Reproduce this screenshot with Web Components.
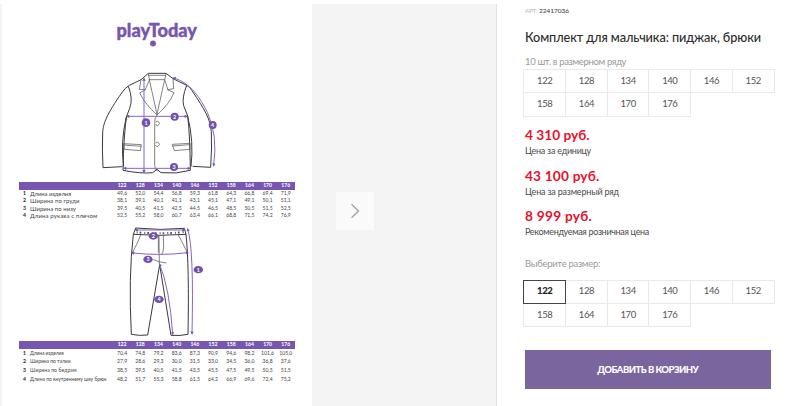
<!DOCTYPE html>
<html lang="ru">
<head>
<meta charset="utf-8">
<title>Комплект для мальчика: пиджак, брюки</title>
<style>
  body {
    margin: 0;
    background: #fff;
    font-family: Lato, "Liberation Sans", sans-serif;
    color: #333;
  }
</style>
</head>
<body>
<product-page>
  <product-gallery slot="gallery">
    <size-sheet></size-sheet>
  </product-gallery>
  <product-info slot="info"></product-info>
</product-page>

<script>
// One line of text, tracked to the width given in the attribute
class TypeLine extends HTMLElement {
  connectedCallback() {
    this.attachShadow({ mode: 'open' }).innerHTML = `
      <style>
        :host { display: block; white-space: nowrap; }
        span { display: block; width: max-content; }
      </style>
      <span><slot></slot></span>
    `;
    const span = this.shadowRoot.querySelector('span');
    const width = parseFloat(this.getAttribute('width'));
    if (!width) return;
    const natural = span.getBoundingClientRect().width;
    const gap = (width - natural) / this.textContent.length;
    span.style.letterSpacing = `${gap.toFixed(3)}px`;
  }
}

class ProductPage extends HTMLElement {
  constructor() {
    super();
    this.attachShadow({ mode: 'open' }).innerHTML = `
      <style>
        :host {
          display: grid;
          grid-template-columns: 497px 1fr;
          height: 406px;
          overflow: hidden;
        }
      </style>
      <slot name="gallery"></slot>
      <slot name="info"></slot>
    `;
  }
}

class ProductGallery extends HTMLElement {
  constructor() {
    super();
    this.attachShadow({ mode: 'open' }).innerHTML = `
      <style>
        :host {
          display: flex;
          align-items: flex-start;
          box-sizing: border-box;
          height: 402px;
          margin-top: 4px;
          padding-left: 2px;
          background: #f4f4f4;
          border-right: 1px solid #e2e2e2;
        }
        button {
          display: flex;
          align-items: center;
          justify-content: center;
          width: 38px;
          height: 38px;
          margin: 188px 0 0 24px;
          padding: 0;
          border: 0;
          background: #fafafa;
        }
      </style>
      <slot></slot>
      <button aria-label="Далее">
        <svg width="10" height="16" viewBox="0 0 10 16" fill="none" stroke="#a0a0a0" stroke-width="1.3">
          <path d="M1.5 1.2 8.5 8 1.5 14.8"/>
        </svg>
      </button>
    `;
  }
}

class SizeTable extends HTMLElement {
  connectedCallback() {
    const data = JSON.parse(this.getAttribute('rows'));
    const sizes = [122, 128, 134, 140, 146, 152, 158, 164, 170, 176];
    this.attachShadow({ mode: 'open' }).innerHTML = `
      <style>
        :host { display: block; width: 276px; color: #444; }
        .row {
          display: grid;
          grid-template-columns: 11px 83px repeat(10, 18.2px);
          align-items: center;
          height: var(--row, 7.5px);
          font-size: 5.1px;
          line-height: 7px;
          text-align: center;
        }
        .head {
          height: 8px;
          margin-bottom: var(--gap, 0);
          background: #7656b0;
          color: #fff;
          font-weight: 700;
        }
        b { color: #222; }
        type-line { text-align: left; font-size: var(--label, 6px); }
      </style>
      <div class="row head"><i></i><i></i>${sizes.map(s => `<span>${s}</span>`).join('')}</div>
      ${data.map(([label, width, values], i) => `
        <div class="row">
          <b>${i + 1}</b>
          <type-line width="${width}">${label}</type-line>
          ${values.split(' ').map(v => `<span>${v}</span>`).join('')}
        </div>`).join('')}
    `;
  }
}

class SizeSheet extends HTMLElement {
  constructor() {
    super();
    const jacket = [
      ['Длина изделия', 41, '49,6 52,0 54,4 56,8 59,3 61,8 64,3 66,8 69,4 71,9'],
      ['Ширина по груди', 49.5, '38,1 39,1 40,1 41,1 43,1 45,1 47,1 49,1 50,1 51,1'],
      ['Ширина по низу', 46, '39,5 40,5 41,5 42,5 44,5 46,5 48,5 50,5 51,5 52,5'],
      ['Длина рукава с плечом', 67.5, '52,5 55,2 58,0 60,7 63,4 66,1 68,8 71,5 74,2 76,9'],
    ];
    const trousers = [
      ['Длина изделия', 33.5, '70,4 74,8 79,2 83,6 87,3 90,9 94,6 98,2 101,6 105,0'],
      ['Ширина по талии', 40.5, '27,9 28,6 29,3 30,0 31,5 33,0 34,5 36,0 36,8 37,6'],
      ['Ширина по бедрам', 46.5, '38,5 39,5 40,5 41,5 43,5 45,5 47,5 49,5 50,5 51,5'],
      ['Длина по внутреннему шву брюк', 76.5, '48,2 51,7 55,3 58,8 61,5 64,2 66,9 69,6 72,4 75,2'],
    ];
    this.attachShadow({ mode: 'open' }).innerHTML = `
      <style>
        :host {
          display: flex;
          flex-direction: column;
          box-sizing: border-box;
          width: 310px;
          height: 402px;
          padding-left: 17px;
          background: #fff;
        }
        svg { display: block; flex: none; }
        .logo { margin: 14px 0 0 91px; }
        .jacket { margin: 6px 0 0 71px; }
        .trousers { margin-left: 91px; }
        .line { fill: none; stroke: #3a3a3a; stroke-width: 3; stroke-linejoin: round; }
        .thin { fill: none; stroke: #555; stroke-width: 2.2; }
        .measure { fill: none; stroke: #8a63cb; stroke-width: 3; }
        .tip { fill: #7656b0; }
        .mark { fill: #7050ae; }
        .num { fill: #fff; font-size: 16px; font-weight: 700; text-anchor: middle; }
        size-table { flex: none; }
        .first { margin-top: 1.7px; --row: 7.5px; --gap: 0; }
        .second { margin-top: 1px; --row: 8.6px; --gap: .3px; --label: 5px; }
      </style>

      <svg class="logo" width="100" height="36" viewBox="110 18 100 36" fill="#7656b0" stroke="#7656b0" stroke-width=".4" stroke-linejoin="round" font-weight="900" font-size="18">
        <text x="116.5" y="37" textLength="80.5" lengthAdjust="spacingAndGlyphs">playToday</text>
        <circle cx="153" cy="43.5" r="2.8"/>
      </svg>

      <svg class="jacket" width="140" height="120" viewBox="0 0 420 360">
        <g class="line">
          <path d="M175 40H228L249 56 290 76Q300 81 306 92C345 150 360 175 364 215Q366 265 362 322L308 319"/>
          <path d="M175 40 153 59 118 76Q106 82 95 99C52 160 39 190 38 219Q36 270 39 323L97 320"/>
          <path d="M110 167Q101 225 99 331 155 342 188 338L201 328 213 338Q260 343 301 331 300 225 293 168"/>
          <path d="M290 76Q275 115 281 137L293 168Q312 245 303 320M115 79Q130 116 119 145L108 174Q91 250 101 320"/>
        </g>
        <g class="thin">
          <path d="M174 46H228M176 59H224M178 59 201 163 224 59M228 42 224 60M175 42 179 61"/>
          <path d="M153 59 148 88 167 89M249 56 251 86 232 89M178 61 165 90 149 99Q165 132 201 165 238 132 252 98L234 90 225 61"/>
          <path d="M201 165Q193 174 194 190V316Q195 330 203 334"/>
          <path d="M101 251 154 254 151 272 103 268ZM247 253 300 250V268L253 272ZM101 255 154 259M247 258 299 254"/>
          <path d="M197 186 203 183 209 190 203 197 196 194M197 249 203 246 209 253 203 260 196 257"/>
        </g>
        <path class="measure" d="M162 57V334M112 169H290M102 325H299M252 54C300 68 330 112 352 157Q384 225 371 316"/>
        <path class="tip" d="M162 52 167 62H157ZM162 340 167 330H157ZM108 169 118 164V174ZM294 169 284 164V174ZM99 325 109 320V330ZM303 325 293 320V330ZM247 53 258 50 255 60ZM371 321 367 310 376 311Z"/>
        <g class="mark"><circle cx="168" cy="188" r="13"/><circle cx="254" cy="170" r="12"/><circle cx="252" cy="321" r="12"/><circle cx="368" cy="195" r="12"/></g>
        <g class="num"><text x="168" y="194">1</text><text x="254" y="176">2</text><text x="252" y="327">3</text><text x="368" y="201">4</text></g>
      </svg>

      <size-table class="first" rows='${JSON.stringify(jacket)}'></size-table>

      <svg class="trousers" width="110" height="120" viewBox="0 0 330 360">
        <g class="line">
          <path d="M77 24Q150 32 223 25L228 43Q150 49 70 43ZM70 43Q55 170 64 343 88 348 113 345L149 134 183 346Q212 348 234 343 238 140 228 43"/>
        </g>
        <path d="M80 37Q150 43 223 36" fill="none" stroke="#555" stroke-width="6" stroke-dasharray="3 6 5 9"/>
        <g class="thin">
          <path d="M92 45Q81 73 67 99M205 45Q219 72 233 99M147 46 148 134M160 46 161 81Q160 100 154 103M145 46V98M130 119Q147 127 169 129"/>
        </g>
        <path class="measure" d="M77 30H223M67 99Q150 108 233 98M149 133Q179 206 188 343M233 27Q252 86 246 341"/>
        <path class="tip" d="M74 30 83 25V35ZM226 30 217 25V35ZM62 99 73 94 72 104ZM237 98 227 94 228 103ZM147 129 156 137 147 139ZM189 346 183 337 192 336ZM232 24 239 32 230 34ZM246 344 241 334 251 335Z"/>
        <g class="mark"><ellipse cx="130" cy="48" rx="14" ry="11"/><ellipse cx="114" cy="118" rx="14" ry="11"/><ellipse cx="265" cy="149" rx="14" ry="11"/><ellipse cx="147" cy="238" rx="14" ry="11"/></g>
        <g class="num"><text x="130" y="54">2</text><text x="114" y="124">3</text><text x="265" y="155">1</text><text x="147" y="244">4</text></g>
      </svg>

      <size-table class="second" rows='${JSON.stringify(trousers)}'></size-table>
    `;
  }
}

class SizeGrid extends HTMLElement {
  connectedCallback() {
    const active = this.getAttribute('active');
    const sizes = ['122', '128', '134', '140', '146', '152', '158', '164', '170', '176'];
    this.attachShadow({ mode: 'open' }).innerHTML = `
      <style>
        :host {
          display: grid;
          grid-template-columns: repeat(6, 41.7px);
          grid-auto-rows: 23.3px;
          height: 47px;
          margin-left: -1.6px;
          font-size: 9.5px;
          color: #555;
        }
        div {
          display: flex;
          align-items: center;
          justify-content: center;
          box-sizing: border-box;
          margin: 0 -1px -1px 0;
          padding-bottom: 1.5px;
          border: 1px solid #e9e9e9;
          letter-spacing: -.4px;
        }
        .active {
          z-index: 1;
          border-color: #444;
          color: #222;
          font-weight: 900;
        }
      </style>
      ${sizes.map(s => `<div class="${s === active ? 'active' : ''}">${s}</div>`).join('')}
    `;
  }
}

class PriceItem extends HTMLElement {
  constructor() {
    super();
    this.attachShadow({ mode: 'open' }).innerHTML = `
      <style>
        :host { display: block; height: 40.7px; }
        .price { height: 17px; line-height: 15px; font-size: 13.7px; font-weight: 700; color: #e8112b; }
        .caption { height: 14px; line-height: 14px; font-size: 9px; color: #4a4a4a; }
      </style>
      <div class="price"><slot name="price"></slot></div>
      <div class="caption"><slot></slot></div>
    `;
  }
}

class BuyButton extends HTMLElement {
  constructor() {
    super();
    this.attachShadow({ mode: 'open' }).innerHTML = `
      <style>
        :host {
          display: flex;
          align-items: center;
          justify-content: center;
          width: 245.5px;
          height: 38.5px;
          background: #7a659f;
          color: #fff;
          font-size: 9.5px;
          font-weight: 900;
        }
      </style>
      <slot></slot>
    `;
  }
}

class ProductInfo extends HTMLElement {
  constructor() {
    super();
    this.attachShadow({ mode: 'open' }).innerHTML = `
      <style>
        :host { display: block; padding: 6px 0 0 28px; }
        .art { display: flex; height: 10px; font-size: 6.5px; line-height: 10px; color: #bbb; }
        .art .code { margin-left: 2px; color: #333; }
        .title { height: 20px; margin-top: 11px; line-height: 20px; font-size: 12.7px; font-weight: 500; color: #2c2c2c; }
        .note { height: 12px; line-height: 12px; font-size: 9.5px; color: #999; }
        .count { margin: 9px 0 1px; }
        .prices { margin-top: 11px; }
        .choose { margin: 8.5px 0 10px; }
        buy-button { margin-top: 23.5px; }
      </style>
      <div class="art">
        <type-line width="12">АРТ:</type-line>
        <type-line class="code" width="30">22417036</type-line>
      </div>
      <type-line class="title" width="236">Комплект для мальчика: пиджак, брюки</type-line>
      <type-line class="note count" width="101">10 шт. в размерном ряду</type-line>
      <size-grid></size-grid>
      <div class="prices">
        <price-item><type-line slot="price" width="64.5">4 310 руб.</type-line><type-line width="66">Цена за единицу</type-line></price-item>
        <price-item><type-line slot="price" width="74.5">43 100 руб.</type-line><type-line width="94">Цена за размерный ряд</type-line></price-item>
        <price-item><type-line slot="price" width="67">8 999 руб.</type-line><type-line width="124">Рекомендуемая розничная цена</type-line></price-item>
      </div>
      <type-line class="note choose" width="75">Выберите размер:</type-line>
      <size-grid active="122"></size-grid>
      <buy-button><type-line width="101">ДОБАВИТЬ В КОРЗИНУ</type-line></buy-button>
    `;
  }
}

customElements.define('type-line', TypeLine);
customElements.define('size-table', SizeTable);
customElements.define('size-sheet', SizeSheet);
customElements.define('size-grid', SizeGrid);
customElements.define('price-item', PriceItem);
customElements.define('buy-button', BuyButton);
customElements.define('product-info', ProductInfo);
customElements.define('product-gallery', ProductGallery);
customElements.define('product-page', ProductPage);
</script>
</body>
</html>
